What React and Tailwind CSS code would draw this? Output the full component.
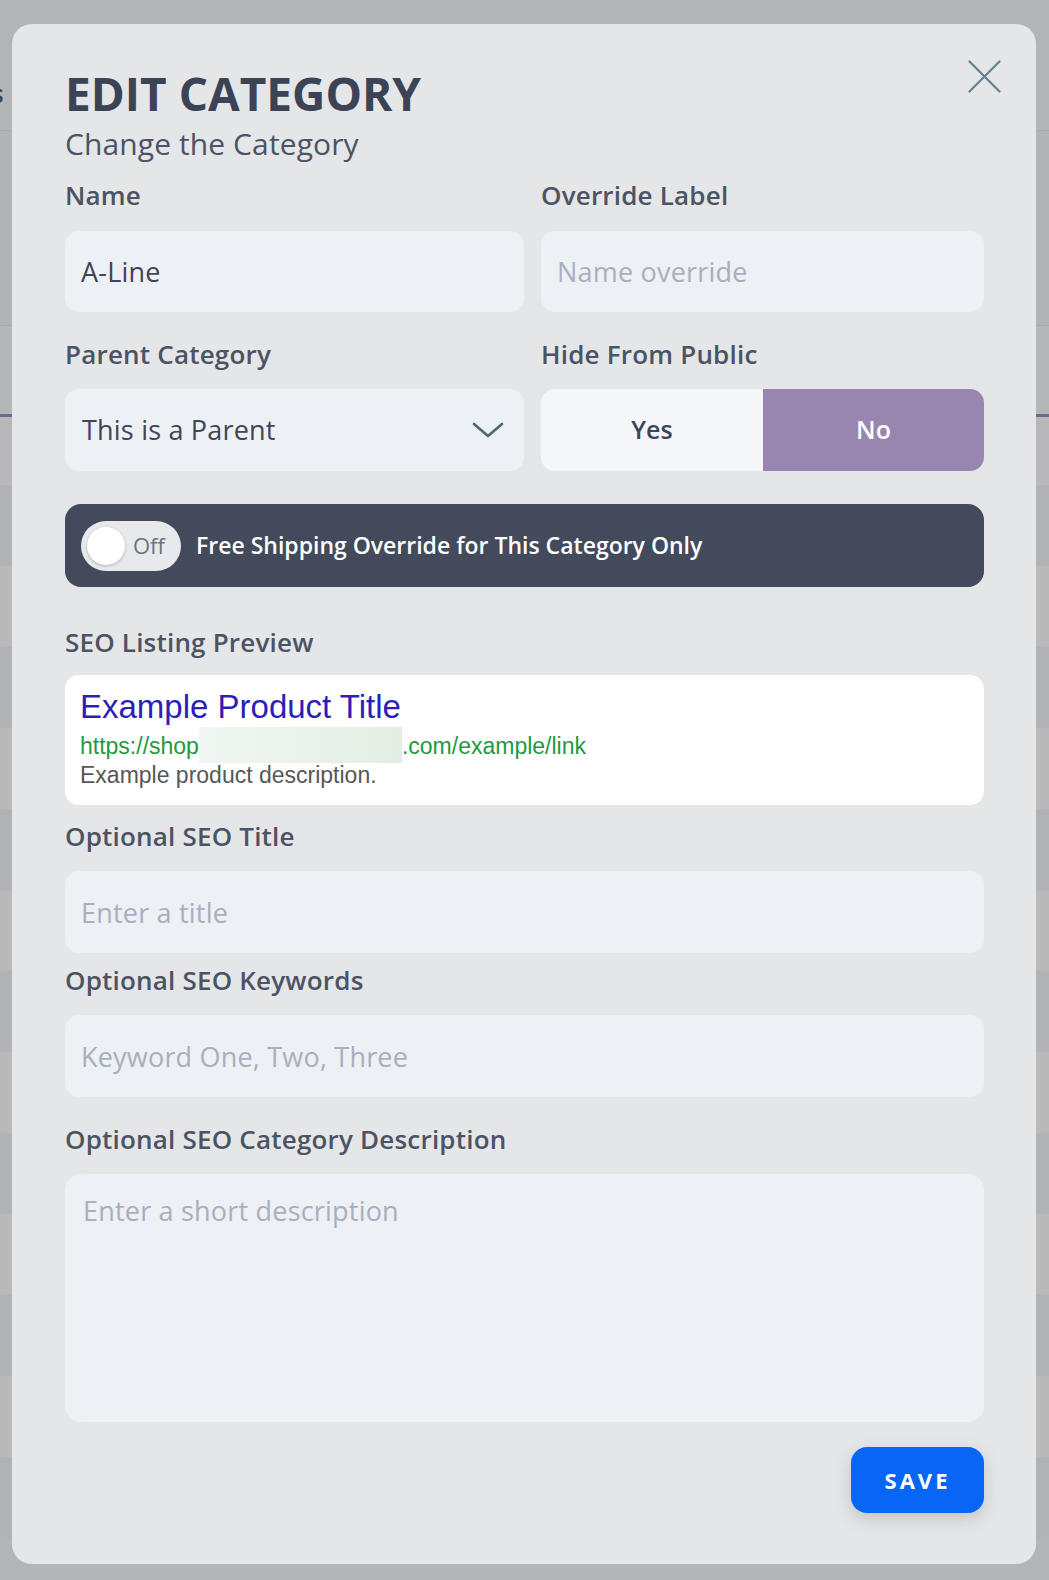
import { useState } from 'react'

const bands = [
  'bg-[#b1b2b5]', 'bg-[#b9b9ba]', 'bg-[#b1b2b5]', 'bg-[#b9b9ba]',
  'bg-[#b1b2b5]', 'bg-[#b9b9ba]', 'bg-[#b1b2b5]', 'bg-[#b9b9ba]',
  'bg-[#b1b2b5]', 'bg-[#b9b9ba]', 'bg-[#b1b2b5]', 'bg-[#b9b9ba]',
  'bg-[#b1b2b5]',
]

function Label({ children, className = 'mb-[20px]' }) {
  return (
    <div className={`text-[26px] leading-[30px] tracking-[0.2px] font-semibold text-[#4b5365] ${className}`}>
      {children}
    </div>
  )
}

function TextInput({ value, placeholder, className = 'h-[81px]' }) {
  return (
    <input
      type="text"
      defaultValue={value}
      placeholder={placeholder}
      className={`w-full ${className} rounded-[14px] bg-[#edf0f4] px-[16px] text-[27px] tracking-[0.2px] text-[#3d4556] placeholder:text-[#a9afbd] outline-none`}
    />
  )
}

function Background() {
  return (
    <div className="flex flex-col">
      <div className="h-[130px] bg-[#b3b4b6] pt-[78px]">
        <span className="block -ml-[9px] text-[26px] leading-[30px] font-semibold text-[#3d4556]">s</span>
      </div>
      <div className="h-px bg-[#a8a9ab]" />
      <div className="h-[194px] bg-[#b2b3b5]" />
      <div className="h-px bg-[#a9aaac]" />
      <div className="h-[88px] bg-[#b5b6b8]" />
      <div className="h-[3px] bg-[#6f6794]" />
      <div className="h-[68px] bg-[#b8b8ba]" />
      {bands.map((c, i) => (
        <div key={i} className={`h-[81px] ${c}`} />
      ))}
    </div>
  )
}

export default function App() {
  const [hidden, setHidden] = useState(false)
  const [freeShip, setFreeShip] = useState(false)

  return (
    <div className="relative w-[1049px] h-[1580px] overflow-hidden bg-[#b4b5b7] font-['Open_Sans',sans-serif]">
      <Background />

      <div className="absolute left-[12px] top-[24px] w-[1024px] rounded-[20px] bg-[#e5e6e7] pl-[53px] pr-[52px] pt-[47px] pb-[51px]">
        <button className="absolute right-[35px] top-[36px] w-[33px] h-[33px]">
          <svg viewBox="0 0 33 33" className="w-full h-full" fill="none" stroke="#62808f" strokeWidth="2.2" strokeLinecap="round">
            <path d="M1.5 1.5 L31.5 31.5 M31.5 1.5 L1.5 31.5" />
          </svg>
        </button>

        <h1 className="text-[46px] leading-[44px] font-bold text-[#3b4355]">EDIT CATEGORY</h1>
        <p className="mt-[13px] text-[30px] leading-[32px] tracking-[0.1px] text-[#4b5365]">Change the Category</p>

        <div className="mt-[20px] grid grid-cols-[459px_443px] gap-x-[17px]">
          <div>
            <Label className="mb-[21px]">Name</Label>
            <TextInput value="A-Line" />
          </div>
          <div>
            <Label className="mb-[21px]">Override Label</Label>
            <TextInput placeholder="Name override" />
          </div>

          <div className="mt-[27px]">
            <Label>Parent Category</Label>
            <div className="h-[82px] rounded-[14px] bg-[#edf0f4] pl-[17px] pr-[20px] flex items-center justify-between">
              <span className="text-[27px] tracking-[0.2px] text-[#3d4556]">This is a Parent</span>
              <svg width="32" height="16" viewBox="0 0 32 16" fill="none" stroke="#4f6773" strokeWidth="2.6" strokeLinecap="round" strokeLinejoin="round">
                <path d="M2 2 L16 14 L30 2" />
              </svg>
            </div>
          </div>
          <div className="mt-[27px]">
            <Label>Hide From Public</Label>
            <div className="h-[82px] rounded-[14px] overflow-hidden flex">
              <button
                onClick={() => setHidden(true)}
                className={`w-[222px] h-full text-[25px] font-semibold ${hidden ? 'bg-[#9886b1] text-white' : 'bg-[#f5f6fa] text-[#3d4556]'}`}
              >
                Yes
              </button>
              <button
                onClick={() => setHidden(false)}
                className={`flex-1 h-full text-[25px] font-semibold ${!hidden ? 'bg-[#9886b1] text-white' : 'bg-[#f5f6fa] text-[#3d4556]'}`}
              >
                No
              </button>
            </div>
          </div>
        </div>

        <div className="mt-[33px] h-[83px] rounded-[16px] bg-[#434a5c] pl-[16px] flex items-center gap-[15px]">
          <button
            onClick={() => setFreeShip(!freeShip)}
            className="w-[100px] h-[50px] rounded-full bg-[#e8e9ed] flex items-center pl-[6px] gap-[8px]"
          >
            <span className="w-[38px] h-[38px] rounded-full bg-white shadow-[0_1px_3px_rgba(0,0,0,0.25)]" />
            <span className="text-[22px] text-[#6b7280]">{freeShip ? 'On' : 'Off'}</span>
          </button>
          <span className="text-[23px] font-semibold text-white">Free Shipping Override for This Category Only</span>
        </div>

        <div className="mt-[40px]">
          <Label className="mb-[18px]">SEO Listing Preview</Label>
          <div className="h-[130px] rounded-[14px] bg-white pl-[15px] pt-[13px] font-['Liberation_Sans',Arial,sans-serif]">
            <div className="text-[33px] leading-[37px] text-[#2a1fb8]">Example Product Title</div>
            <div className="mt-[8px] text-[23px] leading-[26px] text-[#1f9a3f] whitespace-nowrap">
              https://shop
              <span className="inline-block w-[203px] h-[36px] mt-[-10px] mb-[-4px] align-[-5px] bg-gradient-to-r from-[#f1f7f2] to-[#e2eee4]" />
              .com/example/link
            </div>
            <div className="mt-[3px] text-[23px] leading-[26px] text-[#575757]">Example product description.</div>
          </div>
        </div>

        <div className="mt-[16px]">
          <Label>Optional SEO Title</Label>
          <TextInput placeholder="Enter a title" className="h-[82px]" />
        </div>

        <div className="mt-[12px]">
          <Label>Optional SEO Keywords</Label>
          <TextInput placeholder="Keyword One, Two, Three" className="h-[82px]" />
        </div>

        <div className="mt-[27px]">
          <Label className="mb-[20px]">Optional SEO Category Description</Label>
          <textarea
            placeholder="Enter a short description"
            className="block w-full h-[248px] resize-none rounded-[16px] bg-[#edf0f4] px-[18px] pt-[22px] text-[27px] leading-[30px] tracking-[0.2px] text-[#3d4556] placeholder:text-[#a9afbd] outline-none"
          />
        </div>

        <div className="mt-[25px] flex justify-end">
          <button className="w-[133px] h-[66px] rounded-[16px] bg-[#0766f6] text-white text-[22px] font-bold tracking-[3px] shadow-[0_6px_18px_rgba(0,0,0,0.15)]">
            SAVE
          </button>
        </div>
      </div>
    </div>
  )
}
